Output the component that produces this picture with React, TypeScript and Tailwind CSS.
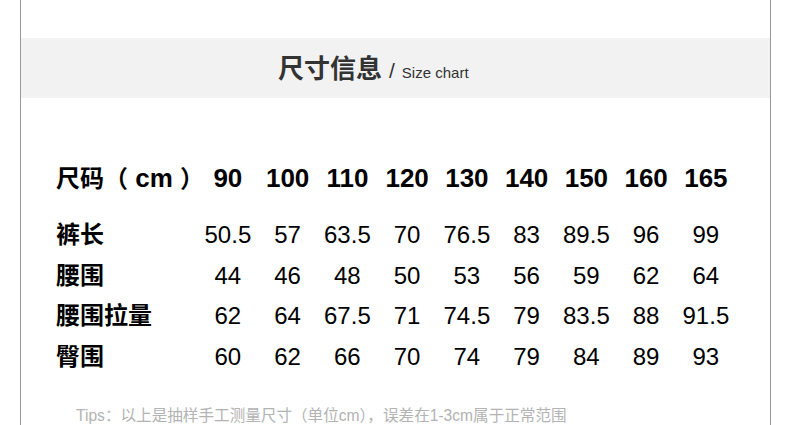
import React from "react";

const sizes = ["90", "100", "110", "120", "130", "140", "150", "160", "165"];
const rows: { label: string; values: string[] }[] = [
  { label: "裤长", values: ["50.5", "57", "63.5", "70", "76.5", "83", "89.5", "96", "99"] },
  { label: "腰围", values: ["44", "46", "48", "50", "53", "56", "59", "62", "64"] },
  { label: "腰围拉量", values: ["62", "64", "67.5", "71", "74.5", "79", "83.5", "88", "91.5"] },
  { label: "臀围", values: ["60", "62", "66", "70", "74", "79", "84", "89", "93"] },
];

const font = { fontFamily: '"Liberation Sans", Arial, "Noto Sans CJK SC", sans-serif' };

export default function App() {
  return (
    <div className="w-[790px] h-[425px] overflow-hidden bg-white" style={font}>
      <div className="ml-[20px] w-[751px] h-[425px] border-x border-[#999999]">
        <div className="h-[38px]" />
        <div className="h-[60px] bg-[#f2f2f2] flex items-baseline pl-[257px] pt-[15px] text-[#333333]">
          <span className="text-[26px] font-bold leading-[32px]">尺寸信息</span>
          <span className="text-[21px] leading-[32px] ml-[7px]">/</span>
          <span className="text-[15px] leading-[32px] ml-[7px]">Size chart</span>
        </div>
        <div className="pl-[35px] mt-[60px] text-black">
          <div className="grid grid-cols-[142px_repeat(9,59.75px)] h-[40px] items-center">
            <div className="text-[24px] font-bold whitespace-nowrap leading-none">
              尺码（<span className="text-[26px]"> cm </span>）
            </div>
            {sizes.map((s) => (
              <div key={s} className="text-[26px] font-bold text-center leading-none">
                {s}
              </div>
            ))}
          </div>
          <div className="mt-[16.67px]">
            {rows.map((r) => (
              <div
                key={r.label}
                className="grid grid-cols-[142px_repeat(9,59.75px)] h-[40.67px] items-center"
              >
                <div className="text-[24px] font-bold whitespace-nowrap leading-none">{r.label}</div>
                {r.values.map((v, i) => (
                  <div key={i} className="text-[24px] text-center leading-none">
                    {v}
                  </div>
                ))}
              </div>
            ))}
          </div>
        </div>
        <div className="mt-[29px] pl-[55px] text-[15.6px] leading-[20px] text-[#b3b3b3] whitespace-nowrap">
          Tips：以上是抽样手工测量尺寸（单位cm），误差在1-3cm属于正常范围
        </div>
      </div>
    </div>
  );
}
